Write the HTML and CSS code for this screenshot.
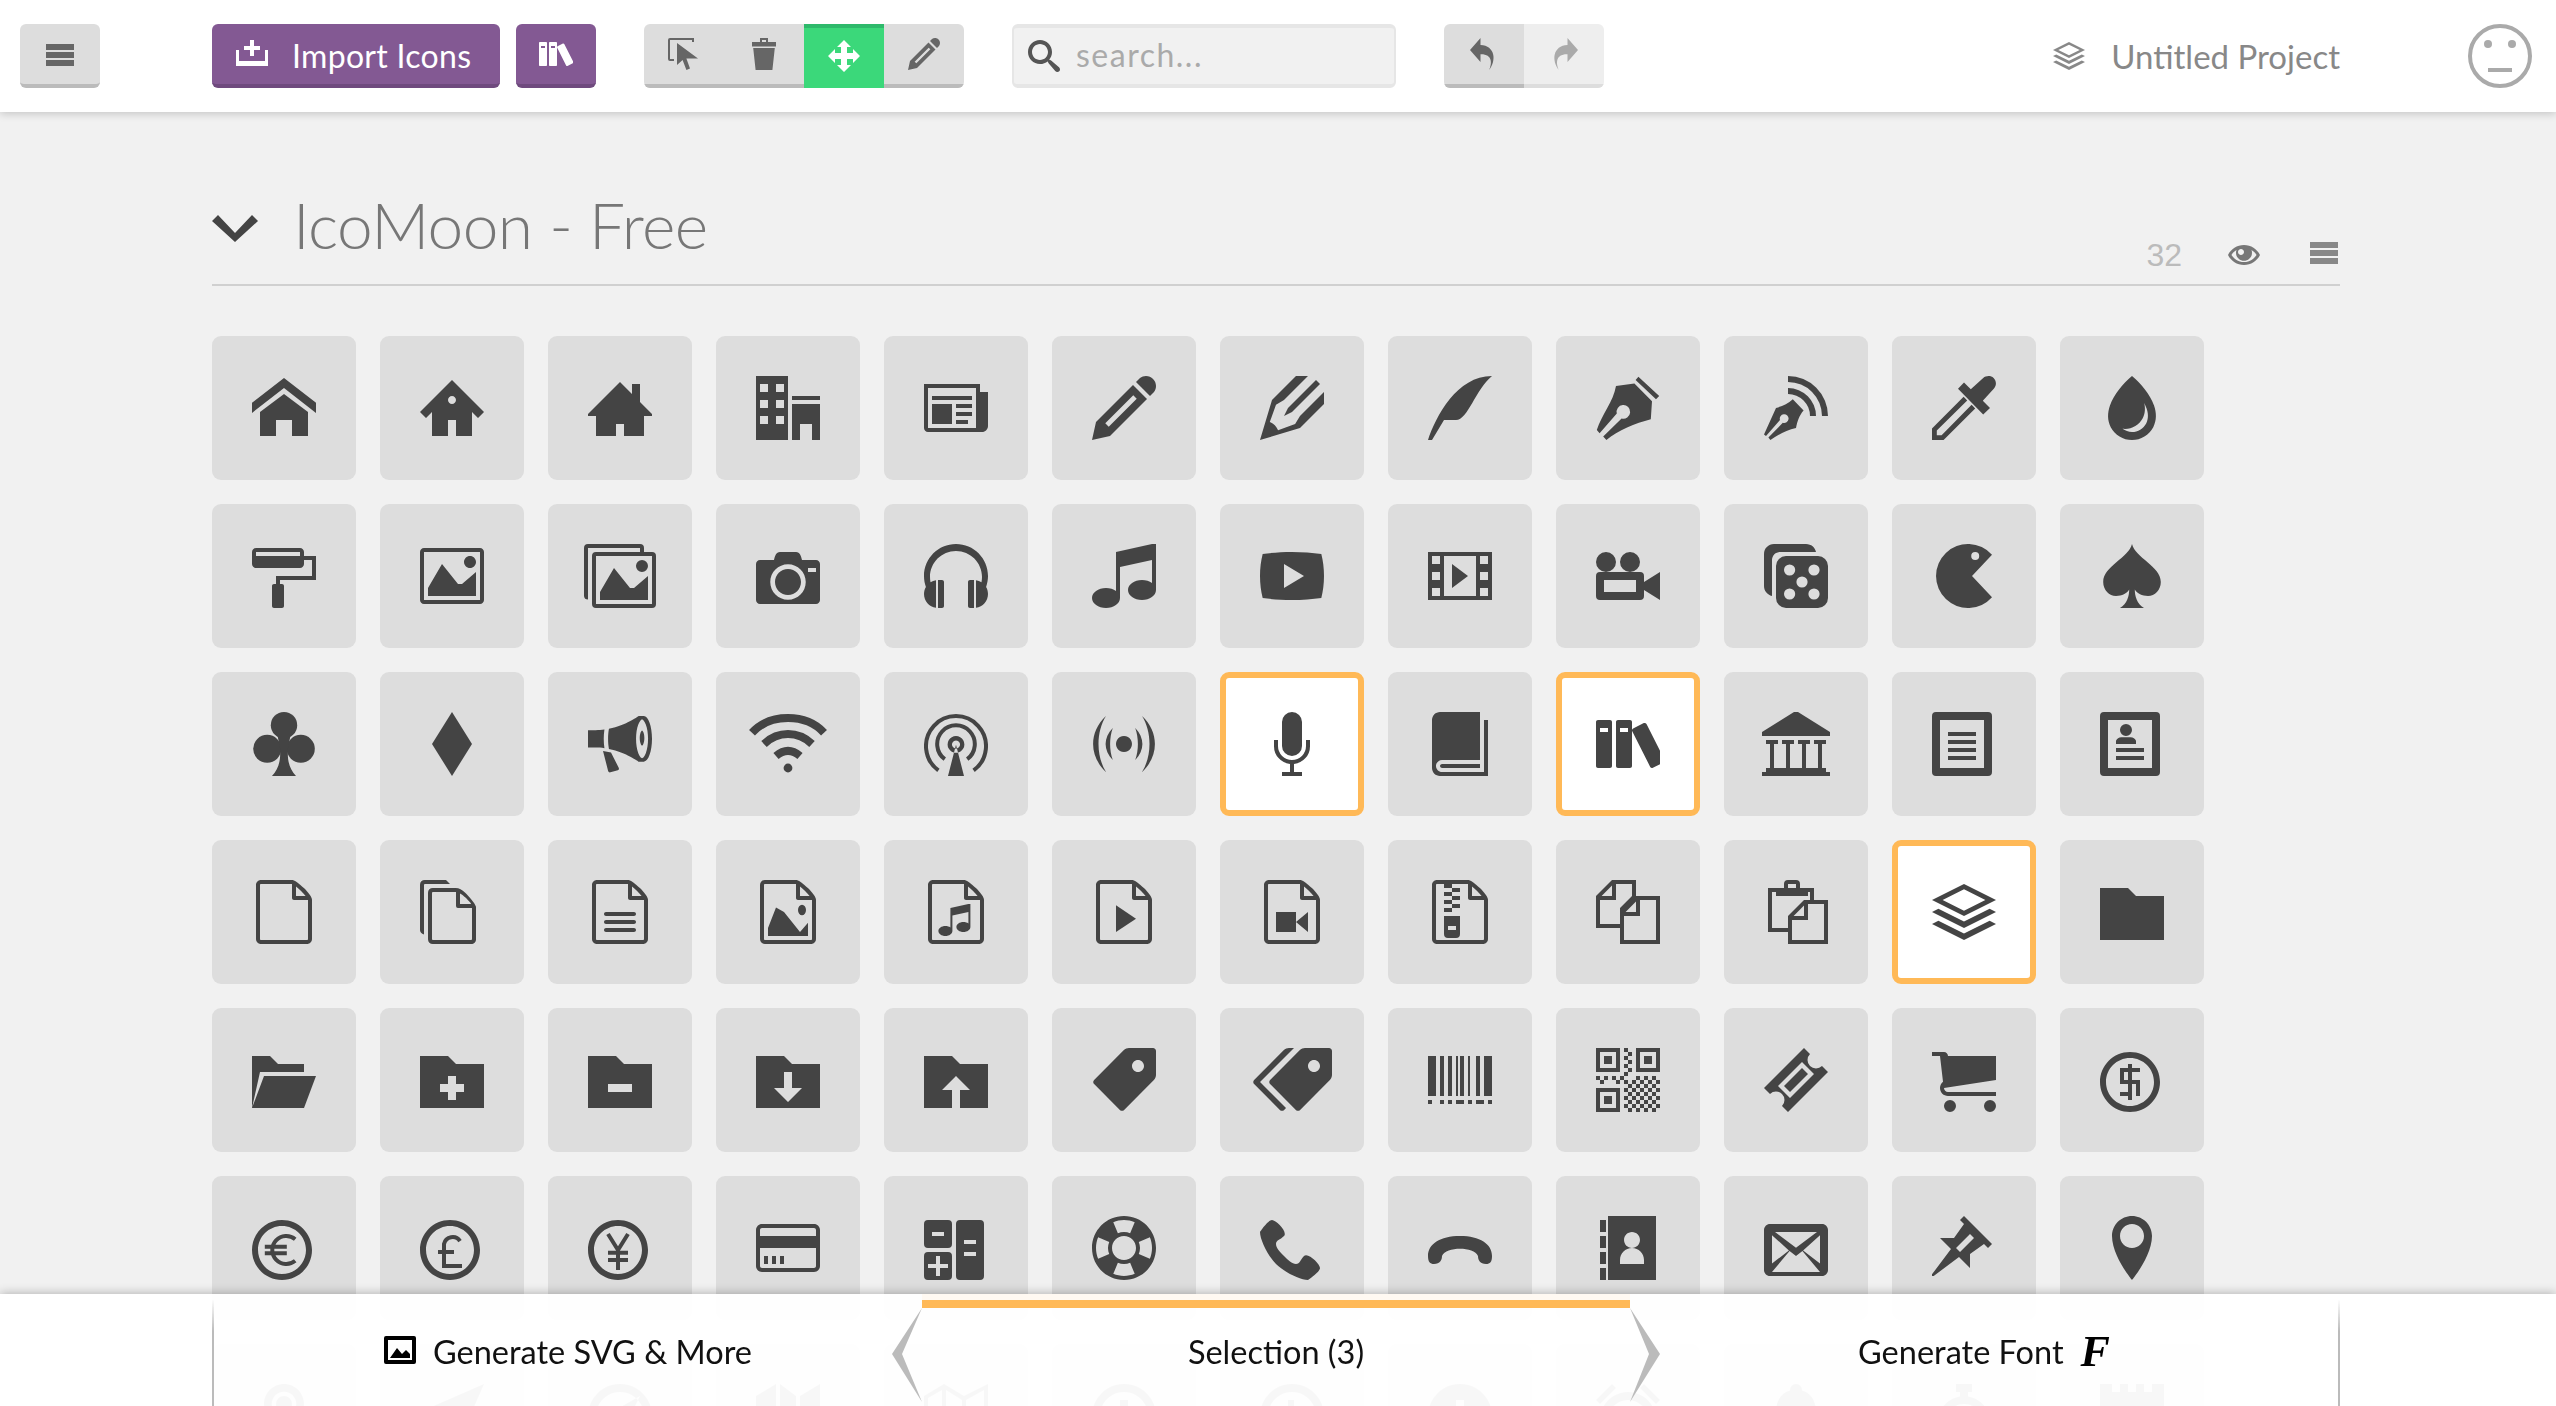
FILE: index.html
```html
<!DOCTYPE html>
<html lang="en">
<head>
<meta charset="utf-8">
<title>IcoMoon App</title>
<link rel="stylesheet" href="styles.css">
</head>
<body>
<svg class="defs" viewBox="0 0 16 16" aria-hidden="true"><defs>
<path id="menu" d="M1 3h14v3h-14zM1 7h14v3h-14zM1 11h14v3h-14z"/>
<path id="books" d="M3.5 2h-3c-0.275 0-0.5 0.225-0.5 0.5v11c0 0.275 0.225 0.5 0.5 0.5h3c0.275 0 0.5-0.225 0.5-0.5v-11c0-0.275-0.225-0.5-0.5-0.5zM3 5h-2v-1h2v1zM8.5 2h-3c-0.275 0-0.5 0.225-0.5 0.5v11c0 0.275 0.225 0.5 0.5 0.5h3c0.275 0 0.5-0.225 0.5-0.5v-11c0-0.275-0.225-0.5-0.5-0.5zM8 5h-2v-1h2v1zM11.954 2.773l-2.679 1.35c-0.246 0.124-0.345 0.426-0.222 0.671l4.5 8.93c0.124 0.246 0.426 0.345 0.671 0.222l2.679-1.35c0.246-0.124 0.345-0.426 0.222-0.671l-4.5-8.93c-0.124-0.246-0.426-0.345-0.671-0.222z"/>
<path id="pencil" d="M13.5 0c1.381 0 2.5 1.119 2.5 2.5 0 0.563-0.186 1.082-0.5 1.5l-1 1-3.5-3.5 1-1c0.418-0.314 0.937-0.5 1.5-0.5zM1 11.5l-1 4.5 4.5-1 9.25-9.25-3.5-3.5-9.25 9.25zM11.181 5.681l-7 7-0.862-0.862 7-7 0.862 0.862z"/>
<path id="stack" d="M16 5l-8-4-8 4 8 4 8-4zM8 2.328l5.345 2.672-5.345 2.672-5.345-2.672 5.345-2.672zM14.398 7.199l1.602 0.801-8 4-8-4 1.602-0.801 6.398 3.199zM14.398 10.199l1.602 0.801-8 4-8-4 1.602-0.801 6.398 3.199z"/>
<path id="image" d="M15 1h-14c-0.55 0-1 0.45-1 1v12c0 0.55 0.45 1 1 1h14c0.55 0 1-0.45 1-1v-12c0-0.55-0.45-1-1-1zM1 2h14v12h-14zM14 4.5c0 0.828-0.672 1.5-1.5 1.5s-1.5-0.672-1.5-1.5 0.672-1.5 1.5-1.5 1.5 0.672 1.5 1.5zM14 13h-12v-2l3.5-6 4 5h1l3.5-3z"/>
<path id="file" d="M14.341 3.579c-0.347-0.473-0.831-1.027-1.362-1.558s-1.085-1.015-1.558-1.362c-0.806-0.591-1.197-0.659-1.421-0.659h-7.75c-0.689 0-1.25 0.561-1.25 1.25v13.5c0 0.689 0.561 1.25 1.25 1.25h11.5c0.689 0 1.25-0.561 1.25-1.25v-9.75c0-0.224-0.068-0.615-0.659-1.421zM12.271 2.729c0.48 0.48 0.856 0.912 1.134 1.271h-2.406v-2.405c0.359 0.278 0.792 0.654 1.271 1.134zM14 14.75c0 0.136-0.114 0.25-0.25 0.25h-11.5c-0.136 0-0.25-0.114-0.25-0.25v-13.5c0-0.135 0.114-0.25 0.25-0.25h7.75v3.5c0 0.276 0.224 0.5 0.5 0.5h3.5v9.75z"/>
<path id="music" d="M15 0h1v11.5c0 1.381-1.567 2.5-3.5 2.5s-3.5-1.119-3.5-2.5c0-1.381 1.567-2.5 3.5-2.5 0.979 0 1.865 0.287 2.5 0.751v-5.751l-8 1.778v7.722c0 1.381-1.567 2.5-3.5 2.5s-3.5-1.119-3.5-2.5c0-1.381 1.567-2.5 3.5-2.5 0.979 0 1.865 0.287 2.5 0.751v-9.751l9-2z"/>
<path id="ring" d="M7.5 1c-4.142 0-7.5 3.358-7.5 7.5s3.358 7.5 7.5 7.5c4.142 0 7.5-3.358 7.5-7.5s-3.358-7.5-7.5-7.5zM7.5 14.5c-3.314 0-6-2.686-6-6s2.686-6 6-6c3.314 0 6 2.686 6 6s-2.686 6-6 6z"/>
</defs></svg>

<header class="topbar">
  <button class="btn btn-gray btn-menu" type="button"><svg class="i32 c-66" viewBox="0 0 16 16"><use href="#menu"/></svg></button>
  <button class="btn btn-purple btn-import" type="button"><svg class="i32 c-white" viewBox="0 0 16 16"><path d="M7 1h2v3h3v2H9v3H7V6H4V4h3zM0 6h1.5v5.5h13V6H16v8H0z"/></svg><span>Import Icons</span></button>
  <button class="btn btn-purple btn-lib" type="button"><svg class="i34 c-white" viewBox="0 0 17 16"><use href="#books"/></svg></button>
  <div class="group group-tools">
    <button class="seg seg-gray" type="button"><svg class="i32 c-66" viewBox="0 0 16 16"><path d="M1 0H13V2H12V1H1V10.5H3V11.5H1a1 1 0 0 1-1-1V1A1 1 0 0 1 1 0zM4.5 2.5V13.5L7.3 11 9.2 16 11 15.2 9.2 10.3H15Z"/></svg></button>
    <button class="seg seg-gray" type="button"><svg class="i32 c-66" viewBox="0 0 16 16"><path d="M6 0H10V2H14V4.3H2V2H6zM7 1V2H9V1zM2.6 5H13.4L12.2 16H3.8z"/></svg></button>
    <button class="seg seg-green" type="button"><svg class="i32 c-white" viewBox="0 0 16 16"><path d="M8 0L11.5 3.5H9.5V6.5H12.5V4.5L16 8 12.5 11.5V9.5H9.5V12.5H11.5L8 16 4.5 12.5H6.5V9.5H3.5V11.5L0 8 3.5 4.5V6.5H6.5V3.5H4.5Z"/></svg></button>
    <button class="seg seg-gray" type="button"><svg class="i32 c-66" viewBox="0 0 16 16"><use href="#pencil"/></svg></button>
  </div>
  <label class="search"><svg class="i32 c-55" viewBox="0 0 16 16"><path d="M15.504 13.616l-3.79-3.223c-0.392-0.353-0.811-0.514-1.149-0.499 0.895-1.048 1.435-2.407 1.435-3.893 0-3.314-2.686-6-6-6s-6 2.686-6 6 2.686 6 6 6c1.486 0 2.845-0.54 3.893-1.435-0.016 0.338 0.146 0.757 0.499 1.149l3.223 3.79c0.552 0.613 1.453 0.665 2.003 0.115s0.498-1.452-0.115-2.003zM6 10c-2.209 0-4-1.791-4-4s1.791-4 4-4 4 1.791 4 4-1.791 4-4 4z"/></svg><input class="search-input" type="text" placeholder="search..."></label>
  <div class="group group-history">
    <button class="seg seg-gray" type="button"><svg class="hist c-66" viewBox="0 0 16 16" preserveAspectRatio="none"><path d="M6 3.5v-3.5l-6 6 6 6v-3.932c6.98-0.164 6.681 4.747 4.904 7.932 4.386-4.741 3.455-12.204-4.904-12.5z"/></svg></button>
    <button class="seg seg-light" type="button"><svg class="hist c-aa" viewBox="0 0 16 16" preserveAspectRatio="none"><path d="M10 3.5v-3.5l6 6-6 6v-3.932c-6.98-0.164-6.681 4.747-4.904 7.932-4.386-4.741-3.455-12.204 4.904-12.5z"/></svg></button>
  </div>
  <div class="project"><svg class="i32 c-88" viewBox="0 0 16 16"><use href="#stack"/></svg><span>Untitled Project</span></div>
  <svg class="smiley" viewBox="0 0 64 64"><circle class="smiley-face" cx="32" cy="32" r="30"/><circle cx="20" cy="20" r="4"/><circle cx="44" cy="20" r="4"/><rect x="20" y="44" width="24" height="4"/></svg>
</header>

<main class="page">
  <div class="sec-head">
    <svg class="chev" viewBox="0 0 46 27"><path d="M0 6L6 0 23 18 40 0 46 6 23 27z"/></svg>
    <h1 class="sec-title">IcoMoon - Free</h1>
    <span class="sec-count">32</span>
    <svg class="i32 c-77 sec-eye" viewBox="0 0 16 16"><path d="M8 3c-3.489 0-6.514 2.032-8 5 1.486 2.968 4.511 5 8 5s6.514-2.032 8-5c-1.486-2.968-4.511-5-8-5zM11.945 5.652c0.94 0.6 1.737 1.403 2.335 2.348-0.598 0.946-1.395 1.749-2.335 2.348-1.181 0.753-2.545 1.152-3.945 1.152s-2.764-0.398-3.945-1.152c-0.94-0.6-1.737-1.403-2.335-2.348 0.598-0.946 1.395-1.749 2.335-2.348 0.061-0.039 0.123-0.077 0.185-0.114-0.156 0.427-0.241 0.888-0.241 1.369 0 2.209 1.791 4 4 4s4-1.791 4-4c0-0.481-0.085-0.942-0.241-1.369 0.062 0.037 0.124 0.075 0.185 0.114zM8 6.5c0 0.828-0.672 1.5-1.5 1.5s-1.5-0.672-1.5-1.5 0.672-1.5 1.5-1.5 1.5 0.672 1.5 1.5z"/></svg>
    <svg class="i32 c-88 sec-menu" viewBox="0 0 16 16"><use href="#menu"/></svg>
  </div>

  <div class="icons">
    <div class="tile"><svg viewBox="0 0 16 16"><path d="M16 9.226l-8-6.21-8 6.21v-2.532l8-6.21 8 6.21zM14 9v6h-4v-4h-4v4h-4v-6l6-4.5z"/></svg></div>
    <div class="tile"><svg viewBox="0 0 16 16"><path d="M8 1l-8 8 1.5 1.5 1.5-1.5v6h4v-4h2v4h4v-6l1.5 1.5 1.5-1.5-8-8zM8 7c-0.552 0-1-0.448-1-1s0.448-1 1-1c0.552 0 1 0.448 1 1s-0.448 1-1 1z"/></svg></div>
    <div class="tile"><svg viewBox="0 0 16 16"><path d="M16 9.5l-3-3v-4.5h-2v2.5l-3-3-8 8v0.5h2v5h5v-3h2v3h5v-5h2z"/></svg></div>
    <div class="tile"><svg viewBox="0 0 16 16"><path d="M0 16h8v-16h-8v16zM5 2h2v2h-2v-2zM5 6h2v2h-2v-2zM5 10h2v2h-2v-2zM1 2h2v2h-2v-2zM1 6h2v2h-2v-2zM1 10h2v2h-2v-2zM9 5h7v1h-7zM9 16h2v-4h3v4h2v-9h-7z"/></svg></div>
    <div class="tile"><svg viewBox="0 0 16 16"><path d="M14 4v-2h-14v11c0 0.552 0.448 1 1 1h13.5c0.828 0 1.5-0.672 1.5-1.5v-8.5h-2zM13 13h-12v-10h12v10zM2 5h10v1h-10zM8 7h4v1h-4zM8 9h4v1h-4zM8 11h3v1h-3zM2 7h5v5h-5z"/></svg></div>
    <div class="tile"><svg viewBox="0 0 16 16"><use href="#pencil"/></svg></div>
    <div class="tile"><svg viewBox="0 0 16 16"><path d="M6 10l2-1 7-7-1-1-7 7-1 2zM4.52 13.548c-0.494-1.043-1.026-1.574-2.069-2.069l1.548-4.262 2-1.217 6-6h-3l-6 6-3 10 10-3 6-6v-3l-6 6-1.217 2z"/></svg></div>
    <div class="tile"><svg viewBox="0 0 16 16"><path d="M0 16c2-6 7.234-16 16-16-4.109 3.297-6 11-9 11s-3 0-3 0l-3 5h-1z"/></svg></div>
    <div class="tile"><svg viewBox="0 0 16 16"><path d="M10.6 .2L15.8 5 15 5.8 9.9 1ZM5 2.5L9.6 1.9 14 6.3 13.7 10.8C9.8 11.8 5.5 13.5 2.6 16L1.8 15.1 6.4 10.6A1.7 1.7 0 1 0 5.2 9.4L.9 14.3 .2 13.5C1.5 9.5 4.3 6.5 5 2.5Z"/></svg></div>
    <div class="tile"><svg viewBox="0 0 16 16"><path d="M6 0A10 10 0 0 1 16 10H14.5A8.5 8.5 0 0 0 6 1.500ZM6 3A7 7 0 0 1 13 10H11.500A5.500 5.500 0 0 0 6 4.500ZM3 8C4.500 7.500 6 7 7.200 5.800L9.900 8.600C8.800 9.800 8.300 11.400 8 13C5.500 13.600 3.300 14.800 1.600 16L1.100 15.400 4.700 11.700A1.100 1.100 0 1 0 4 11L.5 15 0 14.600Z"/></svg></div>
    <div class="tile"><svg viewBox="0 0 16 16"><path d="M6.500 3.200L8 1.600 9.700 3.300 12.800 .5C13.500-.1 14.700-.2 15.400 .5C16.100 1.200 16.200 2.400 15.500 3.100L12.700 6.200 14.500 8 12.800 9.600ZM7.900 5.200L0 13.100V16H2.900L10.800 8.100 9.900 7.200 2.400 14.800H1.200V13.600L8.800 6.100Z"/></svg></div>
    <div class="tile"><svg viewBox="0 0 16 16"><path d="M13.51 7.393c-1.027-2.866-3.205-5.44-5.51-7.393-2.305 1.953-4.482 4.527-5.51 7.393-0.635 1.772-0.698 3.696 0.197 5.397 1.029 1.955 3.104 3.21 5.313 3.21s4.284-1.255 5.313-3.21c0.895-1.701 0.832-3.625 0.197-5.397zM11.543 11.859c-0.684 1.301-2.075 2.141-3.543 2.141-0.861 0-1.696-0.29-2.377-0.791 0.207 0.027 0.416 0.041 0.627 0.041 1.835 0 3.573-1.050 4.428-2.676 0.701-1.333 0.64-2.716 0.373-3.818 0.227 0.44 0.42 0.878 0.576 1.311 0.353 0.985 0.625 2.443-0.084 3.791z"/></svg></div>

    <div class="tile"><svg viewBox="0 0 16 16"><path d="M16 9v-6h-3v-1c0-0.55-0.45-1-1-1h-11c-0.55 0-1 0.45-1 1v3c0 0.55 0.45 1 1 1h11c0.55 0 1-0.45 1-1v-1h2v4h-9v2h-0.5c-0.276 0-0.5 0.224-0.5 0.5v5c0 0.276 0.224 0.5 0.5 0.5h2c0.276 0 0.5-0.224 0.5-0.5v-5c0-0.276-0.224-0.5-0.5-0.5h-0.5v-1h9zM12 3h-11v-1h11v1z"/></svg></div>
    <div class="tile"><svg viewBox="0 0 16 16"><use href="#image"/></svg></div>
    <div class="tile"><svg class="w18" viewBox="0 0 18 16"><path d="M1 0H14a1 1 0 0 1 1 1V2H14V1H1V13.900A1 1 0 0 1 0 13V1A1 1 0 0 1 1 0ZM3 2H17a1 1 0 0 1 1 1V15a1 1 0 0 1-1 1H3a1 1 0 0 1-1-1V3a1 1 0 0 1 1-1zM3 3V15H17V3ZM16 5.500a1.500 1.500 0 1 1-3 0 1.500 1.500 0 0 1 3 0zM16 14H4v-2l3.500-6 4 5h1L16 8z"/></svg></div>
    <div class="tile"><svg viewBox="0 0 16 16"><path d="M4.75 9.5c0 1.795 1.455 3.25 3.25 3.25s3.25-1.455 3.25-3.25-1.455-3.25-3.25-3.25-3.25 1.455-3.25 3.25zM15 4h-3.500c-0.25-1-0.5-2-1.500-2h-4c-1 0-1.25 1-1.500 2h-3.500c-0.55 0-1 0.45-1 1v9c0 0.55 0.45 1 1 1h14c0.55 0 1-0.45 1-1v-9c0-0.55-0.45-1-1-1zM8 13.938c-2.451 0-4.438-1.987-4.438-4.438s1.987-4.438 4.438-4.438c2.451 0 4.438 1.987 4.438 4.438s-1.987 4.438-4.438 4.438zM15 7h-2v-1h2v1z"/></svg></div>
    <div class="tile"><svg viewBox="0 0 16 16"><path d="M4.500 9h-1v7h1c0.275 0 0.5-0.225 0.5-0.5v-6c0-0.275-0.225-0.5-0.5-0.5zM11.500 9c-0.275 0-0.5 0.225-0.5 0.5v6c0 0.275 0.225 0.5 0.5 0.5h1v-7h-1zM16 8c0-4.418-3.582-8-8-8s-8 3.582-8 8c0 0.96 0.169 1.88 0.479 2.732-0.304 0.519-0.479 1.123-0.479 1.768 0 1.763 1.304 3.222 3 3.464v-6.928c-0.499 0.071-0.963 0.248-1.371 0.506-0.084-0.417-0.129-0.849-0.129-1.292 0-3.59 2.91-6.5 6.500-6.500s6.500 2.91 6.500 6.500c0 0.444-0.045 0.875-0.129 1.292-0.408-0.258-0.872-0.435-1.371-0.506v6.928c1.696-0.243 3-1.701 3-3.464 0-0.645-0.175-1.249-0.479-1.768 0.31-0.853 0.479-1.773 0.479-2.732z"/></svg></div>
    <div class="tile"><svg viewBox="0 0 16 16"><use href="#music"/></svg></div>
    <div class="tile"><svg viewBox="0 0 16 16"><path d="M15.331 2.502c-2.244-0.323-4.724-0.502-7.331-0.502s-5.087 0.179-7.331 0.502c-0.43 1.683-0.669 3.543-0.669 5.498s0.239 3.815 0.669 5.498c2.244 0.323 4.724 0.502 7.331 0.502s5.087-0.179 7.331-0.502c0.43-1.683 0.669-3.543 0.669-5.498s-0.239-3.815-0.669-5.498zM6 11v-6l5 3-5 3z"/></svg></div>
    <div class="tile"><svg viewBox="0 0 16 16"><path d="M0 2v12h16v-12h-16zM3 13h-2v-2h2v2zM3 9h-2v-2h2v2zM3 5h-2v-2h2v2zM12 13h-8v-10h8v10zM15 13h-2v-2h2v2zM15 9h-2v-2h2v2zM15 5h-2v-2h2v2zM6 5v6l4-3z"/></svg></div>
    <div class="tile"><svg viewBox="0 0 16 16"><path d="M0 4.500a2.500 2.500 0 1 1 5 0 2.500 2.500 0 0 1-5 0zM6 4.500a2.500 2.500 0 1 1 5 0 2.500 2.500 0 0 1-5 0zM1 7H11a1 1 0 0 1 1 1V13a1 1 0 0 1-1 1H1a1 1 0 0 1-1-1V8A1 1 0 0 1 1 7zM2 9V12H10V9zM12 9.500L16 7V14L12 11.500z"/></svg></div>
    <div class="tile"><svg viewBox="0 0 16 16"><path d="M2 13C.8 12.700 0 11.700 0 10.500V2.500C0 1.100 1.100 0 2.500 0H10.500C11.800 0 12.800 .9 13 2H4C2.900 2 2 2.900 2 4ZM5.500 3H13.500A2.500 2.500 0 0 1 16 5.500V13.500A2.500 2.500 0 0 1 13.500 16H5.500A2.500 2.500 0 0 1 3 13.500V5.500A2.500 2.500 0 0 1 5.500 3ZM5 6.500a1.400 1.400 0 1 0 2.800 0 1.400 1.400 0 1 0-2.800 0zM11.100 6.500a1.400 1.400 0 1 0 2.800 0 1.400 1.400 0 1 0-2.800 0zM8.100 9.500a1.400 1.400 0 1 0 2.800 0 1.400 1.400 0 1 0-2.800 0zM5 12.500a1.400 1.400 0 1 0 2.800 0 1.400 1.400 0 1 0-2.800 0zM11.100 12.500a1.400 1.400 0 1 0 2.800 0 1.400 1.400 0 1 0-2.800 0z"/></svg></div>
    <div class="tile"><svg viewBox="0 0 16 16"><path d="M15 2.700A8 8 0 1 0 15 13.300L10 8ZM9.800 3a1 1 0 1 0 2 0 1 1 0 1 0-2 0z"/></svg></div>
    <div class="tile"><svg viewBox="0 0 16 16"><path d="M8 0C7.200 3.500 .8 5.500 .8 9.500 .8 11.500 2.300 13 4 13 5.500 13 6.700 12.400 7.300 11.400 7.300 13 6.800 15 5 16H11C9.200 15 8.700 13 8.700 11.400 9.300 12.400 10.500 13 12 13 13.700 13 15.200 11.500 15.200 9.500 15.200 5.500 8.800 3.500 8 0Z"/></svg></div>

    <div class="tile"><svg viewBox="0 0 16 16"><circle cx="8" cy="3.300" r="3.300"/><circle cx="3.800" cy="9.200" r="3.500"/><circle cx="12.200" cy="9.200" r="3.500"/><path d="M6 4H10L9 9C8.800 12 9.200 14 11 16H5C6.800 14 7.200 12 7 9Z"/></svg></div>
    <div class="tile"><svg viewBox="0 0 16 16"><path d="M8 0l-5 8 5 8 5-8z"/></svg></div>
    <div class="tile"><svg viewBox="0 0 16 16"><path d="M16 6.707c0-3.139-0.919-5.687-2.054-5.707 0.005-0 0.009-0 0.014-0h-1.296c0 0-3.044 2.287-7.427 3.184-0.134 0.708-0.219 1.551-0.219 2.523s0.085 1.816 0.219 2.523c4.383 0.897 7.427 3.184 7.427 3.184h1.296c-0.005 0-0.009-0-0.014-0.001 1.136-0.020 2.054-2.567 2.054-5.706zM13.513 11.551c-0.147 0-0.305-0.152-0.387-0.243-0.197-0.22-0.387-0.562-0.55-0.989-0.363-0.957-0.564-2.239-0.564-3.611s0.2-2.655 0.564-3.611c0.162-0.428 0.353-0.77 0.55-0.99 0.081-0.091 0.24-0.243 0.387-0.243s0.305 0.152 0.387 0.243c0.197 0.22 0.387 0.562 0.55 0.99 0.363 0.957 0.564 2.239 0.564 3.611s-0.2 2.655-0.564 3.611c-0.162 0.428-0.353 0.77-0.55 0.989-0.081 0.091-0.24 0.243-0.387 0.243zM3.935 6.707c0-0.812 0.060-1.6 0.173-2.33-0.74 0.102-1.39 0.161-2.193 0.161-1.048 0-1.048 0-1.915 0v4.336c0.867 0 0.867 0 1.915 0 0.803 0 1.453 0.059 2.193 0.161-0.113-0.73-0.173-1.518-0.173-2.33zM5.752 10.107l-2-0.383 1.279 5.024c0.066 0.26 0.324 0.413 0.573 0.34l1.852-0.54c0.249-0.073 0.349-0.343 0.222-0.6l-1.926-3.841zM13.513 8.38c-0.057 0-0.118-0.059-0.149-0.094-0.076-0.085-0.149-0.217-0.212-0.381-0.14-0.369-0.217-0.863-0.217-1.392s0.077-1.023 0.217-1.392c0.063-0.165 0.136-0.297 0.212-0.381 0.031-0.035 0.092-0.094 0.149-0.094s0.118 0.059 0.149 0.094c0.076 0.085 0.149 0.217 0.212 0.381 0.14 0.369 0.217 0.863 0.217 1.392s-0.077 1.023-0.217 1.392c-0.063 0.165-0.136 0.297-0.212 0.381-0.031 0.035-0.092 0.094-0.149 0.094z"/></svg></div>
    <div class="tile"><svg class="w20" viewBox="0 0 20 16"><path class="s s2" d="M1 5.200C5.500 .3 14.500 .3 19 5.200M4 8C7.500 4.700 12.500 4.700 16 8M7 11C9 9.300 11 9.300 13 11"/><circle cx="10" cy="14" r="1.100"/></svg></div>
    <div class="tile"><svg viewBox="0 0 16 16"><path class="s s1" d="M3.600 14.600A7.500 7.500 0 1 1 12.400 14.600M5.200 11.800A4.700 4.700 0 1 1 10.800 11.800"/><path d="M8 6a2.100 2.100 0 1 1-.01 0zM8 7.100a1 1 0 1 0 .01 0zM8 8.200L10 16H6Z"/></svg></div>
    <div class="tile"><svg viewBox="0 0 16 16"><path d="M8 6a2 2 0 1 1-.01 0zM3.500 1C-.8 5 -.8 11 3.500 15 1 11 1 5 3.500 1ZM12.500 1C16.800 5 16.800 11 12.500 15 15 11 15 5 12.500 1ZM5.200 4C2.800 6.500 2.800 9.500 5.200 12 4.300 9.500 4.300 6.500 5.200 4ZM10.800 4C13.200 6.500 13.200 9.500 10.800 12 11.700 9.500 11.700 6.500 10.800 4Z"/></svg></div>
    <div class="tile sel"><svg viewBox="0 0 16 16"><path d="M8 11a2.500 2.500 0 0 0 2.500-2.500v-6a2.500 2.500 0 0 0-5 0v6A2.500 2.500 0 0 0 8 11zM11.500 7V8.500a3.500 3.500 0 0 1-7 0V7H3.500V8.500A4.500 4.500 0 0 0 7.500 13V15H5.500V16H10.500V15H8.500V13A4.500 4.500 0 0 0 12.500 8.500V7z"/></svg></div>
    <div class="tile"><svg viewBox="0 0 16 16"><path d="M14 2v13h-10.500c-0.828 0-1.500-0.672-1.500-1.500s0.672-1.500 1.500-1.500h9.500v-12h-10c-1.100 0-2 0.900-2 2v12c0 1.100 0.900 2 2 2h12v-14h-1zM3.500 14c-0.166 0-0.500-0.224-0.500-0.500s0.334-0.500 0.500-0.500h9.500v1h-9.500z"/></svg></div>
    <div class="tile sel"><svg viewBox="0 0 16 16"><use href="#books"/></svg></div>
    <div class="tile"><svg class="w17" viewBox="0 0 17 16"><path d="M16 15v-1h-1v-6h1v-1h-3v1h1v6h-3v-6h1v-1h-3v1h1v6h-3v-6h1v-1h-3v1h1v6h-3v-6h1v-1h-3v1h1v6h-1v1h-1v1h17v-1h-1zM8 0h1l8 5v1h-17v-1l8-5z"/></svg></div>
    <div class="tile"><svg viewBox="0 0 16 16"><path d="M1 0H14a1 1 0 0 1 1 1V15a1 1 0 0 1-1 1H1a1 1 0 0 1-1-1V1A1 1 0 0 1 1 0zM2 2V14H13V2zM4 5h7v1H4zM4 7h7v1H4zM4 9h7v1H4zM4 11h7v1H4z"/></svg></div>
    <div class="tile"><svg viewBox="0 0 16 16"><path d="M1 0H14a1 1 0 0 1 1 1V15a1 1 0 0 1-1 1H1a1 1 0 0 1-1-1V1A1 1 0 0 1 1 0zM2 2V14H13V2zM4 9h7v1H4zM4 11h7v1H4zM5 4.500a1.500 1.500 0 1 0 3 0 1.500 1.500 0 1 0-3 0zM4 8V7.200A1.500 1.500 0 0 1 5.500 6.300H7.500A1.500 1.500 0 0 1 9 7.200V8Z"/></svg></div>

    <div class="tile"><svg viewBox="0 0 16 16"><use href="#file"/></svg></div>
    <div class="tile"><svg viewBox="0 0 16 16"><path d="M1 13.600C.4 13.500 0 13 0 12.500V1.200C0 .5 .5 0 1.200 0H6.500L7.500 1H1.300C1.100 1 1 1.100 1 1.300ZM3.200 2H8.900C9.800 2 10.500 2.400 11.300 3.200C12.100 4 13.700 5.700 14 6.700V14.800C14 15.500 13.500 16 12.800 16H3.200C2.500 16 2 15.500 2 14.800V3.200C2 2.500 2.500 2 3.200 2ZM3.300 3C3.100 3 3 3.100 3 3.300V14.700C3 14.900 3.100 15 3.300 15H12.700C12.900 15 13 14.900 13 14.700V7H9.500A.5 .5 0 0 1 9 6.500V3ZM10 3.400V6H12.800C12.300 5.200 10.800 3.800 10 3.400Z"/></svg></div>
    <div class="tile"><svg viewBox="0 0 16 16"><use href="#file"/><path d="M11.500 13h-7c-0.276 0-0.500-0.224-0.500-0.500s0.224-0.500 0.500-0.500h7c0.276 0 0.500 0.224 0.500 0.500s-0.224 0.500-0.500 0.500zM11.500 11h-7c-0.276 0-0.500-0.224-0.500-0.500s0.224-0.500 0.500-0.500h7c0.276 0 0.500 0.224 0.500 0.500s-0.224 0.500-0.500 0.500zM11.500 9h-7c-0.276 0-0.500-0.224-0.500-0.500s0.224-0.500 0.500-0.500h7c0.276 0 0.500 0.224 0.500 0.500s-0.224 0.500-0.500 0.500z"/></svg></div>
    <div class="tile"><svg viewBox="0 0 16 16"><use href="#file"/><path d="M3 14h10v-3.300L11 13 7 8 5 6.900 3 12zM10.500 7.500a1 1.300 0 1 0 2 0 1 1.300 0 1 0-2 0z"/></svg></div>
    <div class="tile"><svg viewBox="0 0 16 16"><use href="#file"/><path transform="translate(3.600 6) scale(.5)" d="M15 0h1v11.500c0 1.381-1.567 2.500-3.500 2.500s-3.500-1.119-3.500-2.500c0-1.381 1.567-2.500 3.500-2.500 0.979 0 1.865 0.287 2.500 0.751v-5.751l-8 1.778v7.722c0 1.381-1.567 2.500-3.500 2.500s-3.500-1.119-3.500-2.500c0-1.381 1.567-2.500 3.500-2.500 0.979 0 1.865 0.287 2.500 0.751v-9.751l9-2z"/></svg></div>
    <div class="tile"><svg viewBox="0 0 16 16"><use href="#file"/><path d="M6 6.300L11 9.700 6 13z"/></svg></div>
    <div class="tile"><svg viewBox="0 0 16 16"><use href="#file"/><path d="M4 8h5v5H4zM12 8v5L9 10.500z"/></svg></div>
    <div class="tile"><svg viewBox="0 0 16 16"><use href="#file"/><path d="M4 1h2v1H4zM6 2h2v1H6zM4 3h2v1H4zM6 4h2v1H6zM4 5h2v1H4zM6 6h2v1H6zM4 7h2v1H4zM4 9h4v4.500a1 1 0 0 1-1 1H5a1 1 0 0 1-1-1zM5 11.500v1h2v-1z"/></svg></div>
    <div class="tile"><svg viewBox="0 0 16 16"><path d="M16 4H10V0H4L0 4V12H6V16H16ZM4 1.400V4H1.400ZM1 5H5V1H9V4L6 7V11H1ZM10 5.400V8H7.400ZM7 9H11V5H15V15H7Z"/></svg></div>
    <div class="tile"><svg viewBox="0 0 16 16"><path d="M1 2H3V3H2V12H6V13H1ZM11 2H12.500V5H11.500V3H11ZM3 2H5V1A1 1 0 0 1 6 0H8A1 1 0 0 1 9 1V2H11V4H3ZM6 1V2H8V1ZM16 5H10L6 9V16H16ZM10 6.400V9H7.400ZM7 10H11V6H15V15H7Z"/></svg></div>
    <div class="tile sel"><svg viewBox="0 0 16 16"><use href="#stack"/></svg></div>
    <div class="tile"><svg viewBox="0 0 16 16"><path d="M7 2l2 2h7v11h-16v-13z"/></svg></div>

    <div class="tile"><svg viewBox="0 0 16 16"><path d="M13 15l3-8h-13l-3 8zM2 6l-2 9v-13h4.500l2 2h6.500v2z"/></svg></div>
    <div class="tile"><svg viewBox="0 0 16 16"><path d="M9 4l-2-2h-7v13h16v-11h-7zM11 11h-2v2h-2v-2h-2v-2h2v-2h2v2h2v2z"/></svg></div>
    <div class="tile"><svg viewBox="0 0 16 16"><path d="M9 4l-2-2h-7v13h16v-11h-7zM11 11h-6v-2h6v2z"/></svg></div>
    <div class="tile"><svg viewBox="0 0 16 16"><path d="M9 4l-2-2h-7v13h16v-11h-7zM8 13.500l-3.500-3.500h2.500v-4h2v4h2.500l-3.500 3.500z"/></svg></div>
    <div class="tile"><svg viewBox="0 0 16 16"><path d="M9 4l-2-2h-7v13h16v-11h-7zM8 7l3.500 3.500h-2.500v4.500h-2v-4.500h-2.500l3.500-3.500z"/></svg></div>
    <div class="tile"><svg viewBox="0 0 16 16"><path d="M15.250 0h-6c-0.412 0-0.989 0.239-1.280 0.530l-7.439 7.439c-0.292 0.292-0.292 0.769 0 1.061l6.439 6.439c0.292 0.292 0.769 0.292 1.061 0l7.439-7.439c0.292-0.292 0.530-0.868 0.530-1.280v-6c0-0.412-0.338-0.750-0.750-0.750zM11.500 6c-0.828 0-1.500-0.672-1.500-1.500s0.672-1.500 1.500-1.500 1.500 0.672 1.500 1.500-0.672 1.500-1.500 1.500z"/></svg></div>
    <div class="tile"><svg class="w20" viewBox="0 0 20 16"><path d="M19.250 0h-6c-0.412 0-0.989 0.239-1.280 0.530l-7.439 7.439c-0.292 0.292-0.292 0.769 0 1.061l6.439 6.439c0.292 0.292 0.769 0.292 1.061 0l7.439-7.439c0.292-0.292 0.530-0.868 0.530-1.280v-6c0-0.412-0.337-0.750-0.750-0.750zM15.500 6c-0.828 0-1.500-0.672-1.500-1.500s0.672-1.500 1.500-1.500 1.500 0.672 1.500 1.500-0.672 1.500-1.500 1.500zM2 8.500l8.500-8.500h-1.250c-0.412 0-0.989 0.239-1.280 0.530l-7.439 7.439c-0.292 0.292-0.292 0.769 0 1.061l6.439 6.439c0.292 0.292 0.769 0.292 1.061 0l0.470-0.470-6.500-6.500z"/></svg></div>
    <div class="tile"><svg viewBox="0 0 16 16"><path d="M0 2h2v10h-2zM3 2h1v10h-1zM5 2h1v10h-1zM7 2h.5v10h-.5zM8 2h1v10h-1zM10 2h.5v10h-.5zM12 2h1v10h-1zM14 2h2v10h-2zM0 13h1v1h-1zM3 13h1v1h-1zM5 13h1v1h-1zM7 13h2v1h-2zM10 13h1v1h-1zM12 13h2v1h-2zM15 13h1v1h-1z"/></svg></div>
    <div class="tile"><svg viewBox="0 0 16 16"><path d="M0 0h6v6H0zM1 1v4h4V1zM2 2h2v2H2zM10 0h6v6h-6zM11 1v4h4V1zM12 2h2v2h-2zM0 10h6v6H0zM1 11v4h4v-4zM2 12h2v2H2zM7 0h1v1h-1zM8 1h1v1h-1zM7 2h1v1h-1zM8 3h1v1h-1zM7 4h1v1h-1zM8 5h1v1h-1zM7 6h1v1h-1zM7 8h1v1h-1zM8 9h1v1h-1zM7 10h1v1h-1zM8 11h1v1h-1zM7 12h1v1h-1zM8 13h1v1h-1zM7 14h1v1h-1zM8 15h1v1h-1zM15 8h1v1h-1zM1 8h1v1h-1zM2 7h1v1h-1zM0 7h1v1h-1zM4 7h1v1h-1zM5 8h1v1h-1zM6 7h1v1h-1zM9 8h1v1h-1zM10 7h1v1h-1zM11 8h1v1h-1zM12 7h1v1h-1zM13 8h1v1h-1zM14 7h1v1h-1zM15 10h1v1h-1zM9 10h1v1h-1zM10 9h1v1h-1zM11 10h1v1h-1zM12 9h1v1h-1zM13 10h1v1h-1zM14 9h1v1h-1zM15 12h1v1h-1zM9 12h1v1h-1zM10 11h1v1h-1zM11 12h1v1h-1zM12 11h1v1h-1zM13 12h1v1h-1zM14 11h1v1h-1zM15 14h1v1h-1zM9 14h1v1h-1zM10 13h1v1h-1zM11 14h1v1h-1zM12 13h1v1h-1zM13 14h1v1h-1zM14 13h1v1h-1zM10 15h1v1h-1zM12 15h1v1h-1zM14 15h1v1h-1z"/></svg></div>
    <div class="tile"><svg viewBox="0 0 16 16"><path d="M10 0L11.500 1.500A2 2 0 0 0 14.500 4.500L16 6 6 16 4.500 14.500A2 2 0 0 0 1.500 11.500L0 10ZM9.500 3.500L12.500 6.500 6.500 12.500 3.500 9.500ZM9.500 5L11 6.500 6.500 11 5 9.500Z"/></svg></div>
    <div class="tile"><svg viewBox="0 0 16 16"><path d="M6 14.500a1.500 1.500 0 1 1-3 0 1.500 1.500 0 1 1 3 0zM16 14.500a1.500 1.500 0 1 1-3 0 1.500 1.500 0 1 1 3 0zM16 8v-6h-12c0-0.552-0.448-1-1-1h-3v1h2l0.751 6.438c-0.458 0.367-0.751 0.930-0.751 1.562 0 1.105 0.895 2 2 2h12v-1h-12c-0.552 0-1-0.448-1-1 0-0.003 0-0.007 0-0.010l13-1.990z"/></svg></div>
    <div class="tile"><svg viewBox="0 0 16 16"><use href="#ring"/><path d="M8 8v-2h2v-1h-2v-1h-1v1h-2v4h2v2h-2v1h2v1h1v-1h2v-4h-2zM7 8h-1v-2h1v2zM9 12h-1v-3h1v3z"/></svg></div>

    <div class="tile"><svg viewBox="0 0 16 16"><use href="#ring"/><path class="s s1" d="M10.800 5.800A3.500 3.500 0 1 0 10.800 11.200M3.200 7.700h5.500M3.200 9.300h5.500"/></svg></div>
    <div class="tile"><svg viewBox="0 0 16 16"><use href="#ring"/><path class="s s1" d="M10 6.300A2.200 2.200 0 0 0 6 7V12.500H10.500M4.500 9h4"/></svg></div>
    <div class="tile"><svg viewBox="0 0 16 16"><use href="#ring"/><path class="s s1" d="M5 4.500L7.500 8.500 10 4.500M7.500 8.500V13.500M5 9.200h5M5 11h5"/></svg></div>
    <div class="tile"><svg viewBox="0 0 16 16"><path d="M14.500 2h-13c-0.825 0-1.500 0.675-1.500 1.500v9c0 0.825 0.675 1.500 1.500 1.500h13c0.825 0 1.500-0.675 1.500-1.500v-9c0-0.825-0.675-1.500-1.500-1.500zM1.500 3h13c0.271 0 0.500 0.229 0.500 0.500v1.500h-14v-1.500c0-0.271 0.229-0.500 0.500-0.500zM14.500 13h-13c-0.271 0-0.500-0.229-0.500-0.500v-4.500h14v4.500c0 0.271-0.229 0.500-0.500 0.500zM2 10h1v2h-1zM4 10h1v2h-1zM6 10h1v2h-1z"/></svg></div>
    <div class="tile"><svg viewBox="0 0 16 16"><path d="M1 1h5a1 1 0 0 1 1 1v5a1 1 0 0 1-1 1H1a1 1 0 0 1-1-1V2a1 1 0 0 1 1-1zM2 4v1h3V4zM1 9h5a1 1 0 0 1 1 1v5a1 1 0 0 1-1 1H1a1 1 0 0 1-1-1v-5a1 1 0 0 1 1-1zM3 10v2H1v1h2v2h1v-2h2v-1H4v-2zM9 1h5a1 1 0 0 1 1 1v13a1 1 0 0 1-1 1H9a1 1 0 0 1-1-1V2a1 1 0 0 1 1-1zM10 6v1h3V6zM10 9v1h3V9z"/></svg></div>
    <div class="tile"><svg viewBox="0 0 16 16"><path d="M8 0c-4.418 0-8 3.582-8 8s3.582 8 8 8 8-3.582 8-8-3.582-8-8-8zM5 8c0-1.657 1.343-3 3-3s3 1.343 3 3-1.343 3-3 3-3-1.343-3-3zM14.468 10.679l-2.772-1.148c0.196-0.472 0.304-0.989 0.304-1.531s-0.108-1.059-0.304-1.531l2.772-1.148c0.342 0.825 0.532 1.730 0.532 2.679s-0.189 1.854-0.532 2.679zM10.679 1.532l-1.148 2.772c-0.472-0.196-0.989-0.304-1.531-0.304s-1.059 0.108-1.531 0.304l-1.148-2.772c0.825-0.342 1.730-0.532 2.679-0.532s1.854 0.189 2.679 0.532zM1.532 5.321l2.772 1.148c-0.196 0.472-0.304 0.989-0.304 1.531s0.108 1.059 0.304 1.531l-2.772 1.148c-0.342-0.825-0.532-1.730-0.532-2.679s0.189-1.854 0.532-2.679zM5.321 14.468l1.148-2.772c0.472 0.196 0.989 0.304 1.531 0.304s1.059-0.108 1.531-0.304l1.148 2.772c-0.825 0.342-1.730 0.532-2.679 0.532s-1.854-0.189-2.679-0.532z"/></svg></div>
    <div class="tile"><svg viewBox="0 0 16 16"><path d="M11 10c-1 1-1 2-2 2s-2-1-3-2-2-2-2-3 1-1 2-2-2-4-3-4-3 3-3 3c0 2 2.055 6.055 4 8s6 4 8 4c0 0 3-2 3-3s-3-4-4-3z"/></svg></div>
    <div class="tile"><svg viewBox="0 0 16 16"><path d="M0 10C0 7 3 5 8 5S16 7 16 10C16 11.500 15.500 12 14.500 12 13 12 12.500 11 12.500 10 12 8.800 10 8.200 8 8.200S4 8.800 3.500 10C3.500 11 3 12 1.500 12 .5 12 0 11.500 0 10Z"/></svg></div>
    <div class="tile"><svg viewBox="0 0 16 16"><path d="M3 0v16h12v-16h-12zM9 4.005c1.102 0 1.995 0.893 1.995 1.995s-0.893 1.995-1.995 1.995-1.995-0.893-1.995-1.995 0.893-1.995 1.995-1.995zM12 12h-6v-1c0-1.657 1.343-3 3-3s3 1.343 3 3v1zM1 1h1.500v3h-1.500v-3zM1 5h1.500v3h-1.500v-3zM1 9h1.500v3h-1.500v-3zM1 13h1.500v3h-1.500v-3z"/></svg></div>
    <div class="tile"><svg viewBox="0 0 16 16"><path d="M14.500 2h-13c-0.825 0-1.500 0.675-1.500 1.500v10c0 0.825 0.675 1.500 1.500 1.500h13c0.825 0 1.500-0.675 1.500-1.500v-10c0-0.825-0.675-1.500-1.500-1.500zM6.230 8.600l-4.230 3.295v-7.095l4.230 3.800zM2.756 4h10.488l-5.244 3.938-5.244-3.938zM6.395 8.777l1.605 1.223 1.605-1.223 4.395 5.223h-12l4.395-5.223zM9.770 8.600l4.230-3.800v7.095l-4.230-3.295z"/></svg></div>
    <div class="tile"><svg viewBox="0 0 16 16"><path d="M8 0l-1 1 1 1-2.500 3.500h-3.500l2.750 2.750-4.750 6.330v0.420h0.420l6.330-4.750 2.750 2.750v-3.500l3.500-2.500 1 1 1-1-8-8zM7 9l-1-1 3.500-3.500 1 1-3.500 3.500z"/></svg></div>
    <div class="tile"><svg viewBox="0 0 16 16"><path d="M8 0c-2.761 0-5 2.239-5 5 0 5 5 11 5 11s5-6 5-11c0-2.761-2.239-5-5-5zM8 8c-1.657 0-3-1.343-3-3s1.343-3 3-3 3 1.343 3 3-1.343 3-3 3z"/></svg></div>

    <div class="tile"><svg viewBox="0 0 16 16"><path d="M8 0c-2.761 0-5 2.239-5 5 0 5 5 11 5 11s5-6 5-11c0-2.761-2.239-5-5-5zM8 8.063c-1.691 0-3.063-1.371-3.063-3.063s1.371-3.063 3.063-3.063 3.063 1.371 3.063 3.063-1.371 3.063-3.063 3.063zM6 5a2 2 0 1 0 4 0 2 2 0 1 0-4 0z"/></svg></div>
    <div class="tile"><svg viewBox="0 0 16 16"><path d="M16 0L0 7l7 2 2 7z"/></svg></div>
    <div class="tile"><svg viewBox="0 0 16 16"><path d="M8 0a8 8 0 1 0 .01 0zM8 2a6 6 0 1 1-.01 0zM13 3L6 7 3 13 10 9z"/></svg></div>
    <div class="tile"><svg viewBox="0 0 16 16"><path d="M0 3l5-3v13l-5 3zM6 0l4 3v13l-4-3zM11 3l5-3v13l-5 3z"/></svg></div>
    <div class="tile"><svg viewBox="0 0 16 16"><path d="M0 3l5-3 5 3 6-3v13l-6 3-5-3-5 3zM1 3.500v10l3.500-2v-10zM5.500 1.500v10l4 2.500v-10zM10.500 4v10l4.500-2.500v-10z"/></svg></div>
    <div class="tile"><svg viewBox="0 0 16 16"><path d="M8 0a8 8 0 1 0 .01 0zM8 2a6 6 0 1 1-.01 0zM7 4h2v5H7z"/></svg></div>
    <div class="tile"><svg viewBox="0 0 16 16"><path d="M8 0a8 8 0 1 0 .01 0zM8 2a6 6 0 1 1-.01 0zM7 4h1.500v4H7z"/></svg></div>
    <div class="tile"><svg viewBox="0 0 16 16"><path d="M8 0a8 8 0 1 0 .01 0zM7 4h2v5H7z"/></svg></div>
    <div class="tile"><svg viewBox="0 0 16 16"><path d="M0 4L4 0 5 1 1 5zM16 4L12 0 11 1 15 5zM8 2a7 7 0 1 0 .01 0zM8 4a5 5 0 1 1-.01 0z"/></svg></div>
    <div class="tile"><svg viewBox="0 0 16 16"><path d="M8 0c1 0 1.500 .8 1.500 1.600 2.500 .7 3.500 3 3.500 5.400v4l2 2v1H1v-1l2-2V7c0-2.400 1-4.700 3.500-5.400C6.500 .8 7 0 8 0z"/></svg></div>
    <div class="tile"><svg viewBox="0 0 16 16"><path d="M6 0h4v2H9v1.100a6.500 6.500 0 1 1-2 0V2H6zM8 5a4.500 4.500 0 1 0 .01 0z"/></svg></div>
    <div class="tile"><svg viewBox="0 0 16 16"><path d="M0 0h3v2h2V0h2v2h2V0h2v2h2V0h3v16H0zM2 6v8h12V6z"/></svg></div>
  </div>
</main>

<footer class="dock">
  <div class="dock-inner">
    <div class="tab"><svg class="i32 c-black" viewBox="0 0 16 16"><path d="M1 1h14a1 1 0 0 1 1 1v12a1 1 0 0 1-1 1H1a1 1 0 0 1-1-1V2a1 1 0 0 1 1-1zM2 3v10h12V3zM3 12L6.500 7 9 10 11 8 13 10v2z"/></svg><span>Generate SVG &amp; More</span></div>
    <div class="tab tab-active">
      <svg class="tab-arrow tab-arrow-l" viewBox="0 0 30 94"><path d="M30 0L0 46 30 94 10 46z"/></svg>
      <span>Selection (3)</span>
      <svg class="tab-arrow tab-arrow-r" viewBox="0 0 30 94"><path d="M0 0L30 46 0 94 19 46z"/></svg>
    </div>
    <div class="tab"><span>Generate Font</span><span class="font-f">F</span></div>
  </div>
</footer>
</body>
</html>
```
FILE: styles.css
```css
* { box-sizing: border-box; }
html, body { margin: 0; height: 100%; overflow: hidden; }
body {
  background: #f1f1f1;
  font-family: "Lato", "Open Sans", sans-serif;
  color: #444;
}
.defs { display: none; }
svg { fill-rule: evenodd; display: block; flex: none; }

.i32 { width: 32px; height: 32px; }
.i34 { width: 34px; height: 32px; }
.hist { width: 28px; height: 32px; }
.c-66 { fill: #666; }
.c-55 { fill: #555; }
.c-77 { fill: #777; }
.c-88 { fill: #888; }
.c-aa { fill: #aaa; }
.c-white { fill: #fff; }
.c-black { fill: #000; }

/* top bar */
.topbar {
  position: relative;
  z-index: 2;
  display: flex;
  align-items: center;
  height: 112px;
  padding: 0 24px 0 20px;
  background: #fff;
  box-shadow: 0 2px 8px rgba(0, 0, 0, .18);
}
button { font: inherit; padding: 0; margin: 0; cursor: pointer; }
.btn {
  display: flex;
  align-items: center;
  justify-content: center;
  width: 80px;
  height: 64px;
  border: 0;
  border-bottom: 4px solid #bbb;
  border-radius: 6px;
  color: #fff;
}
.btn-gray { background: #ddd; }
.btn-purple { background: #835993; border-bottom-color: #6f4a7e; }
.btn-menu { margin-right: 112px; }
.btn-import {
  width: 288px;
  margin-right: 16px;
  justify-content: flex-start;
  padding-left: 24px;
  gap: 24px;
  font-size: 32px;
  letter-spacing: .3px;
}
.btn-import span { padding-top: 2px; }
.btn-lib { margin-right: 48px; }
.group { display: flex; height: 64px; border-radius: 6px; overflow: hidden; }
.group-tools { margin-right: 48px; }
.group-history { margin-left: 48px; }
.seg {
  display: flex;
  align-items: center;
  justify-content: center;
  width: 80px;
  height: 64px;
  border: 0;
  border-bottom: 4px solid #bbb;
}
.seg-gray { background: #ddd; }
.seg-light { background: #eee; border-bottom-color: #ddd; }
.seg-green { background: #3bd87a; border-top: 4px solid #2eb96b; border-bottom-color: #3bd87a; }
.search {
  display: flex;
  align-items: center;
  gap: 16px;
  width: 384px;
  height: 64px;
  padding: 0 14px;
  background: #f1f1f1;
  border: 2px solid #e6e6e6;
  border-width: 4px 2px;
  border-radius: 6px;
}
.search-input {
  flex: 1;
  min-width: 0;
  border: 0;
  padding: 0 0 3px;
  background: transparent;
  font: inherit;
  font-size: 32px;
  letter-spacing: 1.5px;
  color: #555;
  outline: 0;
}
.search-input::placeholder { color: #aaa; opacity: 1; }
.project {
  display: flex;
  align-items: center;
  gap: 26px;
  margin-left: auto;
  margin-right: 128px;
  font-size: 33px;
  color: #888;
}
.smiley { width: 64px; height: 64px; fill: #aaa; }
.smiley-face { fill: none; stroke: #aaa; stroke-width: 4; }

/* section */
.page {
  height: calc(100vh - 112px);
  overflow: hidden;
  padding: 0 216px 0 212px;
}
.sec-head {
  display: flex;
  align-items: flex-end;
  height: 174px;
  padding-bottom: 12px;
  border-bottom: 2px solid #d0d0d0;
}
.chev { width: 46px; height: 27px; margin: 0 35px 30px 0; fill: #444; }
.sec-title {
  margin: 0 auto 9px 0;
  font-size: 64px;
  font-weight: 300;
  line-height: 76px;
  letter-spacing: -.6px;
  color: #777;
}
.sec-count {
  margin: 0 46px 1px 0;
  font: 32px/32px "Liberation Sans", Arial, sans-serif;
  color: #bbb;
}
.sec-eye { margin: 0 48px 1px 0; }
.sec-menu { margin-bottom: 4px; }

.icons {
  display: flex;
  flex-wrap: wrap;
  gap: 24px;
  margin-top: 50px;
}
.tile {
  display: flex;
  align-items: center;
  justify-content: center;
  width: 144px;
  height: 144px;
  border-radius: 9px;
  background: #ddd;
}
.tile svg { width: 64px; height: 64px; fill: #444; }
.tile svg.w17 { width: 68px; }
.tile svg.w18 { width: 72px; }
.tile svg.w20 { width: 80px; }
.tile.sel { background: #fff; border: 6px solid #ffb957; }
.s { fill: none; stroke: #444; }
.s1 { stroke-width: 1; }
.s2 { stroke-width: 2; }

/* bottom dock */
.dock {
  position: fixed;
  left: 0;
  right: 0;
  bottom: 0;
  z-index: 3;
  height: 112px;
  padding: 6px 0 0 212px;
  background: rgba(255, 255, 255, .96);
  box-shadow: 0 0 10px rgba(0, 0, 0, .3);
}
.dock-inner {
  display: flex;
  width: 2128px;
  height: 106px;
  border: solid transparent;
  border-width: 0 2px;
  border-image: linear-gradient(rgba(187, 187, 187, 0), #bbb 30%) 1;
}
.tab {
  position: relative;
  flex: 1;
  display: flex;
  justify-content: center;
  gap: 17px;
  padding-top: 24px;
  border-top: 8px solid transparent;
  font-size: 32.5px;
  line-height: 40px;
  color: #111;
}
.tab .i32 { margin-top: 2px; }
.tab-active { border-top-color: #ffb957; box-shadow: 0 -6px 0 #fff9f2; }
.tab-arrow { position: absolute; top: 0; width: 30px; height: 94px; fill: #bbb; }
.tab-arrow-l { left: -30px; }
.tab-arrow-r { right: -30px; }
.font-f {
  font: italic bold 44px/40px "Liberation Serif", serif;
  color: #000;
}
```
